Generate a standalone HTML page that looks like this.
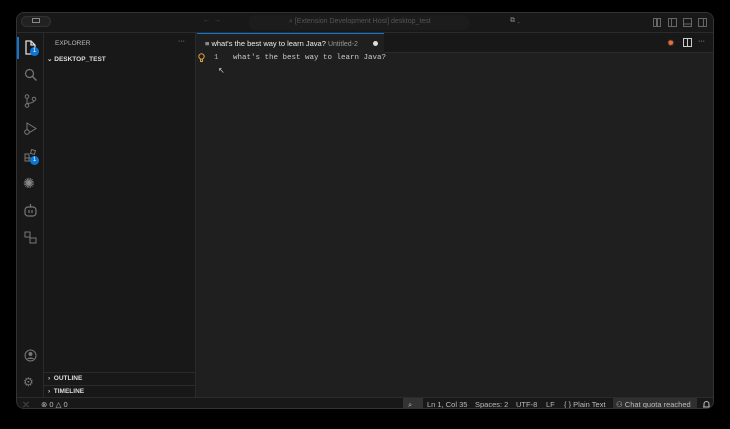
<!DOCTYPE html>
<html><head><style>
*{margin:0;padding:0;box-sizing:border-box}
body{width:730px;height:429px;background:#000;font-family:"Liberation Sans",sans-serif;overflow:hidden;position:relative;color:#ccc}
.win{position:absolute;left:16px;top:12px;width:698px;height:397px;background:#1f1f1f;border-radius:8px;overflow:hidden;border:1px solid #333}
.title{position:absolute;left:0;top:0;width:100%;height:20px;background:#181818;border-bottom:1px solid #2b2b2b}
.act{position:absolute;left:0;top:20px;width:27px;height:365px;background:#181818;border-right:1px solid #2b2b2b}
.side{position:absolute;left:27px;top:20px;width:152px;height:365px;background:#181818;border-right:1px solid #2b2b2b}
.status{position:absolute;left:0;top:384px;width:100%;height:13px;background:#181818;border-top:1px solid #2b2b2b;font-size:7.5px;color:#bbb}
.status span{position:absolute;top:2px}
.ic{position:absolute;left:7px}
.t{position:absolute;font-size:7px}
.badge{position:absolute;width:9px;height:9px;border-radius:50%;background:#0a78d4;color:#fff;font-size:6px;text-align:center;line-height:9px}
.mono{font-family:"Liberation Mono",monospace}
</style></head><body>
<div class="win">
 <div class="title">
  <div style="position:absolute;left:4px;top:3px;width:30px;height:11px;border-radius:6px;background:#222;border:1px solid #333"></div>
  <div style="position:absolute;left:15px;top:5px;width:8px;height:5px;border:1px solid #888"></div>
  <div class="t" style="left:186px;top:4px;color:#555">←&nbsp;&nbsp;→</div>
  <div style="position:absolute;left:232px;top:2px;width:220px;height:15px;border-radius:5px;background:#1c1c1c"></div>
  <div class="t" style="left:272px;top:5px;color:#555">⌕ [Extension Development Host] desktop_test</div>
  <div class="t" style="left:493px;top:4px;color:#888">⧉ <span style="color:#555">⌄</span></div>
  <svg style="position:absolute;left:636px;top:5px" width="56" height="10"><g fill="none" stroke="#666"><rect x="0.5" y="0.5" width="3" height="8"/><rect x="4.5" y="0.5" width="3" height="8"/><rect x="15.5" y="0.5" width="8" height="8"/><path d="M18.5 0.5v8"/><rect x="30.5" y="0.5" width="8" height="8"/><path d="M30.5 6h8"/><rect x="45.5" y="0.5" width="8" height="8"/><path d="M50.5 0.5v8"/></g></svg>
 </div>
 <div class="act">
  <div style="position:absolute;left:0;top:4px;width:2px;height:22px;background:#0a78d4"></div>
  <svg class="ic" style="top:7px" width="13" height="15" viewBox="0 0 13 15"><path d="M2 1h5l4 4v9H2z M7 1v4h4" fill="none" stroke="#ddd" stroke-width="1.3"/></svg>
  <div class="badge" style="left:13px;top:14px">1</div>
  <svg class="ic" style="top:35px" width="13" height="13"><circle cx="5.5" cy="5.5" r="4" fill="none" stroke="#777" stroke-width="1.2"/><path d="M8.5 8.5l4 4" stroke="#777" stroke-width="1.3"/></svg>
  <svg class="ic" style="top:61px" width="13" height="14"><circle cx="3" cy="2.5" r="1.8" fill="none" stroke="#777"/><circle cx="3" cy="11.5" r="1.8" fill="none" stroke="#777"/><circle cx="10" cy="5" r="1.8" fill="none" stroke="#777"/><path d="M3 4.3v5.5M10 6.8c0 3-7 2-7 3" fill="none" stroke="#777"/></svg>
  <svg class="ic" style="top:89px" width="13" height="13"><path d="M3 1l9 5.5-9 5.5z" fill="none" stroke="#777"/><circle cx="3" cy="10" r="2.3" fill="#181818" stroke="#777"/></svg>
  <svg class="ic" style="top:116px" width="13" height="13"><rect x="1" y="5" width="4" height="4" fill="none" stroke="#777"/><rect x="5" y="9" width="4" height="3" fill="none" stroke="#777"/><rect x="1" y="9" width="4" height="3" fill="none" stroke="#777"/><rect x="7" y="1" width="4" height="4" fill="none" stroke="#777" transform="rotate(15 9 3)"/></svg>
  <div class="badge" style="left:13px;top:123px">1</div>
  <div class="t" style="left:6px;top:142px;font-size:14px;color:#888">✺</div>
  <svg class="ic" style="top:171px" width="13" height="13"><rect x="1" y="3" width="11" height="9" rx="3" fill="none" stroke="#777" stroke-width="1.2"/><path d="M6.5 0v3M5 6v3M8 6v3" stroke="#777" stroke-width="1.2"/></svg>
  <svg class="ic" style="top:198px" width="13" height="13"><rect x="1" y="1" width="5" height="5" fill="none" stroke="#777"/><rect x="6" y="7" width="6" height="5" fill="none" stroke="#777"/></svg>
  <svg class="ic" style="top:316px" width="13" height="13"><circle cx="6.5" cy="6.5" r="5.5" fill="none" stroke="#777"/><circle cx="6.5" cy="5" r="2" fill="#777"/><path d="M3 10c1-2 6-2 7 0" fill="#777"/></svg>
  <div class="t" style="left:6px;top:342px;font-size:12px;color:#777">⚙</div>
 </div>
 <div class="side">
  <div class="t" style="left:11px;top:7px;color:#bbb;font-size:6.5px">EXPLORER</div>
  <div class="t" style="left:134px;top:5px;color:#bbb">···</div>
  <div class="t" style="left:3px;top:22px;color:#ddd;font-size:6.5px;font-weight:bold">⌄ DESKTOP_TEST</div>
  <div style="position:absolute;left:0;top:339px;width:100%;border-top:1px solid #2b2b2b"></div>
  <div class="t" style="left:4px;top:342px;color:#ddd;font-size:6.5px;font-weight:bold">›&nbsp; OUTLINE</div>
  <div style="position:absolute;left:0;top:352px;width:100%;border-top:1px solid #2b2b2b"></div>
  <div class="t" style="left:4px;top:355px;color:#ddd;font-size:6.5px;font-weight:bold">›&nbsp; TIMELINE</div>
 </div>
 <div style="position:absolute;left:180px;top:20px;width:518px;height:20px;background:#181818;border-bottom:1px solid #2b2b2b"></div>
 <div style="position:absolute;left:180px;top:20px;width:187px;height:21px;background:#1f1f1f;border-top:1px solid #0a78d4"></div>
 <div class="t" style="left:188px;top:26px;color:#eee;font-size:7.5px">≡ what's the best way to learn Java? <span style="color:#999;font-size:7px">Untitled-2</span></div>
 <div style="position:absolute;left:356px;top:28px;width:5px;height:5px;border-radius:50%;background:#ddd"></div>
 <div class="t" style="left:650px;top:25px;color:#e07040;font-size:9px">✹</div>
 <svg style="position:absolute;left:666px;top:25px" width="9" height="9"><rect x="0.5" y="0.5" width="8" height="8" fill="none" stroke="#ccc"/><path d="M4.5 0.5v8" stroke="#ccc"/></svg>
 <div class="t" style="left:681px;top:25px;color:#ccc">···</div>
 <svg style="position:absolute;left:181px;top:40px" width="7" height="10"><circle cx="3.5" cy="3.5" r="2.7" fill="none" stroke="#d9a040"/><path d="M2.5 6.5v2h2v-2" fill="none" stroke="#d9a040"/></svg>
 <div class="t mono" style="left:197px;top:41px;color:#aaa;font-size:7.5px">1</div>
 <div class="t mono" style="left:216px;top:41px;color:#ccc;font-size:7.5px">what's the best way to learn Java?</div>
 <div class="t" style="left:201px;top:53px;color:#ccc;font-size:8px">↖</div>
 <div class="status">
  <span style="left:6px;color:#999">⤫</span>
  <span style="left:24px">⊗ 0 △ 0</span>
  <div style="position:absolute;left:386px;top:0;width:20px;height:13px;background:#333"></div>
  <span style="left:391px">⌕</span>
  <span style="left:410px">Ln 1, Col 35</span>
  <span style="left:458px">Spaces: 2</span>
  <span style="left:499px">UTF-8</span>
  <span style="left:529px">LF</span>
  <span style="left:547px">{ } Plain Text</span>
  <div style="position:absolute;left:596px;top:0;width:84px;height:13px;background:#2f2f2f"></div>
  <span style="left:599px">⚇ Chat quota reached</span>
  <svg style="position:absolute;left:685px;top:2px" width="9" height="9"><path d="M2 7V4a2.5 2.5 0 015 0v3zM1 7h7M3.5 8.5h2" fill="none" stroke="#bbb"/></svg>
 </div>
</div>
</body></html>
